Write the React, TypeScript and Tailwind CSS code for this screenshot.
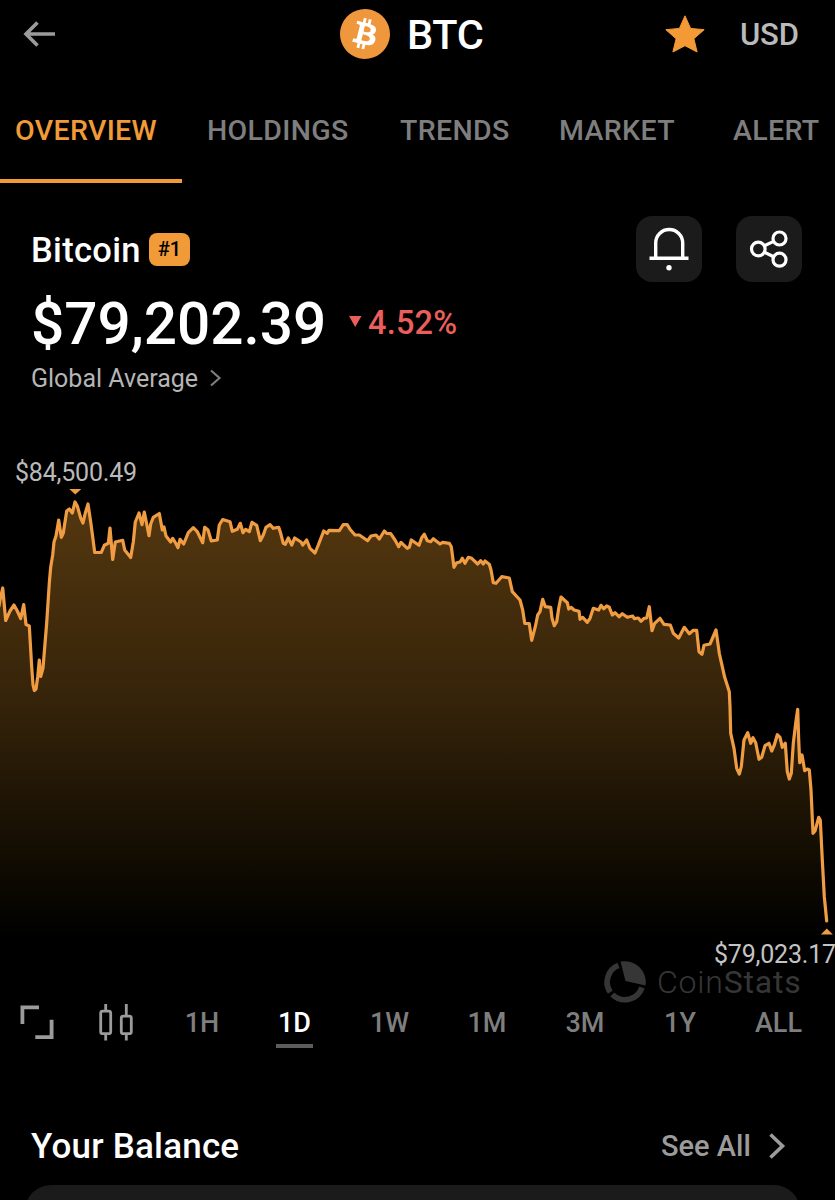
import { SiBitcoin } from 'react-icons/si'

const tabs = [
  { label: 'OVERVIEW', box: 'w-[182px] pl-[15px]', active: true },
  { label: 'HOLDINGS', box: 'w-[193px] pl-[25px]' },
  { label: 'TRENDS', box: 'w-[159px] pl-[25px]' },
  { label: 'MARKET', box: 'w-[174px] pl-[25px]' },
  { label: 'ALERT', box: 'w-[127px] pl-[25px]' },
]

const periods = [
  { label: '1H', box: 'w-[92px]' },
  { label: '1D', box: 'w-[93px]', active: true },
  { label: '1W', box: 'w-[97px]' },
  { label: '1M', box: 'w-[98px]' },
  { label: '3M', box: 'w-[98px]' },
  { label: '1Y', box: 'w-[92px]' },
  { label: 'ALL', box: 'w-[105px]' },
]

// 24h price line, x,y pairs
const line =
  '-1,606 0,600 2.7,588 5.7,620.5 10,611 14,605 17.3,611 20.7,618.5 23.7,604.5 26,624.5 29.3,626 31.7,667 33,685 34.3,690.5 36,689 37.7,677 39.3,660 40.7,676.5 43,668 46.7,623 49.3,583 50.7,567 52.7,555 54,542 56,536 58.7,520 61.3,537.3 63.3,533 66.7,511 69.3,509 72.3,513 75,502 77.3,506 80.7,518 83,523 85.3,513 88,504 90.7,522 92.7,537 94.7,552.5 101.3,552.3 104.3,545.3 108.3,543.3 110,528 112.7,559.5 115.3,542 122.7,540.3 124.7,550 130.7,557.5 133.3,542 135.3,522 139,513 142,524.7 144.3,512 149,535.7 150.7,524 153.3,517.3 159.3,513.5 162.3,530 164,527 166,536 170.7,542 172.7,538.3 175.7,543.3 178,547.7 180,539.3 183.7,544 188.3,532.7 193.3,527.7 197.3,531.7 202.7,542.7 204.7,527.3 208,530 211.3,541 217.3,540 219.3,525 222.7,519.5 230,521.7 232.3,531.3 237.3,529.3 240.3,523.3 243,532.7 245.7,529.3 249.3,531.7 252,522.3 256.7,525.3 260.3,540.7 263.3,535 266,527.3 270,524.7 273.3,528.3 278.7,527.3 280.7,533.3 283.3,543.3 285.3,544.3 288.3,538 291.7,545 294.7,538 301,542 302.7,545 306.7,540 310,548.3 315,553 318.3,545 323.7,531 327.3,533.3 329,530.3 339.3,530.7 343.3,524.7 347.3,524.7 350,529.3 355,535 359.3,535 367.7,540.7 371,536 376,535 379.3,539 384.3,531 386.7,533.3 390.7,533.7 395,540 398.7,546.7 401,542.3 407.3,548.3 409.3,547.3 411.3,540 419,545.3 421.7,537.7 424.3,534.3 427.3,540.7 430.7,541.7 433.3,538.7 440,544 442.7,542.3 449.3,543.3 451.3,546.7 454,567.3 456.7,562.7 460,562 462.3,558.3 465,563.3 468.3,557.3 471.7,558.3 477.7,564 480.7,560.7 483.3,564 485,561 489.3,564.3 491,570 493.3,582.7 496,583.3 501.7,576.7 509.3,578 512.3,591.7 520,600 522.7,610 524.7,623.3 529.3,623.7 531.7,640.3 535.3,626.7 537.7,615 540,611.7 542.7,599.3 545.3,606.7 550.7,607.3 552,618.3 554.3,625.7 556.7,621.7 558.7,608.3 561,597 567.3,602.7 568.7,609 571.3,607.3 574,610 579,611.3 580,619.3 582.7,617.3 587.3,622.3 590,618.3 593.3,608.3 598.7,610 601,605.3 603.7,608.7 606.7,606 609.3,607.3 612.3,615 615,612.7 619,616.7 622.3,613.7 627.3,617.3 632.7,616 634.3,618.7 638.3,618 641,621.3 644,618.3 646.7,618 649.3,606.7 652,630.7 654.7,623.3 660,618.3 664,624.3 670.3,625 673.3,633.3 678.7,638 684.3,627.3 689.3,633.7 693.3,630.3 696.7,630.3 699,651.7 702,654.3 704,645.3 710,644 716,630 719.3,653.3 724.7,677.3 729.3,691.7 730,707 730.7,733.3 734,748.3 736.7,768.3 739.3,774 741.3,766.7 744,740 747.7,732.7 750.7,743.3 753,737.7 755.7,742.7 759,759.3 761.7,757.3 765,745.7 769,743.3 771.7,751 774.3,745 777.3,734.7 780,737.3 782.3,747.3 785.3,743.3 787.3,771.7 789.3,779 791.3,773.3 793.3,743.3 795.7,723.3 797.7,709.3 798.7,740 799.7,762.7 802,755 804.7,770.7 807.3,769 809.3,770 811,790 813,833.3 815,831 818.7,817.3 820.3,820 822.3,860 824.3,896.7 826.7,921'

function Header() {
  return (
    <header className="flex h-[69px] items-center pb-[2px]">
      <svg className="ml-[23px] h-[26px] w-[33px]" viewBox="0 0 33 26" fill="none" stroke="#9b9b9b" strokeWidth="3.6">
        <path d="M14.5 1.5 3 13l11.500 11.500M3 13h29" />
      </svg>
      <div className="ml-[284px] size-[50px] rounded-full bg-[radial-gradient(white_60%,transparent_61%)]">
        <SiBitcoin className="size-[50px] text-[#ef973c]" />
      </div>
      <h1 className="ml-[17px] w-[79px] pt-[2px] text-[41.500px] font-medium tracking-[-0.3px]">BTC</h1>
      <svg className="ml-[179px] h-[38px] w-[40px]" viewBox="0 0 40 38" fill="#f39a36" stroke="#f39a36" strokeLinejoin="round">
        <path d="m20 .8 5.600 12.600 13.600 1.300-10.300 9 3.200 13.300L20 30.700 7.900 37l3.200-13.300-10.300-9 13.600-1.300Z" />
      </svg>
      <span className="ml-[35px] pt-[2px] text-[31px] font-medium tracking-[-0.2px] text-[#bababa]">USD</span>
    </header>
  )
}

function Tabs() {
  return (
    <nav className="flex h-[114px] overflow-hidden">
      {tabs.map(tab => (
        <button
          key={tab.label}
          className={`flex shrink-0 items-center border-b-4 pt-[15px] text-[28.500px] font-medium tracking-[0.350px] ${tab.box} ${tab.active ? 'border-[#f19a38] text-[#f19a38]' : 'border-transparent text-[#7e7e7e]'}`}
        >
          {tab.label}
        </button>
      ))}
    </nav>
  )
}

function Summary() {
  return (
    <section className="pt-[33px] pl-[31px]">
      <div className="flex h-[66px] items-center">
        <h2 className="w-[118px] pt-[2px] text-[34.500px] font-medium tracking-[0.300px]">Bitcoin</h2>
        <span className="flex h-[33px] w-[41px] items-center justify-center rounded-[8px] bg-[#f19a38] text-[20px] font-medium text-black">#1</span>
        <button className="ml-[446px] flex size-[66px] items-center justify-center rounded-[16px] bg-[#1b1b1b]">
          <svg className="size-[66px]" viewBox="0 0 66 66" fill="none" stroke="white" strokeWidth="3.400">
            <path d="M13.500 42.300h39M19.700 42V27a13.500 13.500 0 0 1 27 0v15" />
            <circle cx="33" cy="51.800" r="2.700" fill="white" stroke="none" />
          </svg>
        </button>
        <button className="ml-[34px] flex size-[66px] items-center justify-center rounded-[16px] bg-[#1b1b1b]">
          <svg className="size-[66px]" viewBox="0 0 66 66" fill="none" stroke="white" strokeWidth="3.200">
            <circle cx="22.300" cy="33" r="6.800" />
            <circle cx="43.500" cy="22.500" r="6.500" />
            <circle cx="43.500" cy="43.700" r="6.500" />
            <path d="m28.400 29.800 9.200-4.400M28.400 36.200l9.200 4.600" />
          </svg>
        </button>
      </div>
      <div className="flex h-[82px] items-center">
        <span className="w-[318px] pt-[2px] text-[58.500px] font-medium">$79,202.39</span>
        <svg className="mb-[3px] h-[12px] w-[13px]" viewBox="0 0 13 12" fill="#ea5e5b">
          <path d="M0 0h12.500L6.200 11Z" />
        </svg>
        <span className="ml-[6px] pt-[1px] text-[32.500px] font-medium tracking-[0.200px] text-[#ea5e5b]">4.52%</span>
      </div>
      <div className="flex h-[28px] items-center">
        <span className="w-[179px] text-[25px] text-[#b5b5b5]">Global Average</span>
        <svg className="mb-[1px] h-[18px] w-[12px]" viewBox="0 0 12 18" fill="none" stroke="#7d7d7d" strokeWidth="2.200">
          <path d="m1 1.500 8.500 7.500L1 16.500" />
        </svg>
      </div>
    </section>
  )
}

function Chart() {
  return (
    <section className="relative h-[604px]">
      <svg className="h-[604px] w-full" viewBox="0 392 835 604">
        <defs>
          <linearGradient id="fill" gradientUnits="userSpaceOnUse" x1="0" y1="500" x2="0" y2="940">
            <stop offset="0" stopColor="#54370f" />
            <stop offset="0.45" stopColor="#36240a" />
            <stop offset="0.8" stopColor="#130d02" />
            <stop offset="1" stopColor="#000000" />
          </linearGradient>
        </defs>
        <polygon points={`-1,960 ${line} 826.7,960`} fill="url(#fill)" />
        <polyline points={line} fill="none" stroke="#f09c42" strokeWidth="3.200" strokeLinejoin="round" strokeLinecap="round" />
        <path d="M69.300 489h12L75.300 494.500ZM820.800 934.500h12L826.800 928.500Z" fill="#f09c42" />
      </svg>
      <span className="absolute top-[66px] left-[15px] text-[25px] leading-[30px] tracking-[-0.200px] text-[#bababa]">$84,500.49</span>
      <span className="absolute top-[548px] left-[714px] text-[25px] leading-[30px] tracking-[-0.200px] text-[#c4c4c4]">$79,023.17</span>
      <div className="absolute top-[568px] left-[604px] flex h-[44px] items-center text-[#363636]">
        <svg className="size-[42px]" viewBox="0 0 42 42">
          <path d="M14.500 4.400A18 18 0 0 0 6.200 31.200M8.300 33.500A18 18 0 0 0 38 26.500" fill="none" stroke="currentColor" strokeWidth="5.600" />
          <path d="M16.500.6A21 21 0 0 1 41.500 24.500L21.500 20Z" fill="currentColor" />
        </svg>
        <span className="ml-[11px] text-[32px] font-light tracking-[0.800px]">
          Coin<span className="font-normal">Stats</span>
        </span>
      </div>
    </section>
  )
}

function Periods() {
  return (
    <div className="flex h-[54px] items-center">
      <svg className="mb-[2px] ml-[20px] size-[35px]" viewBox="0 0 35 35" fill="none" stroke="#9b9b9b" strokeWidth="3.800">
        <path d="M19 2.400H2.400V19M15.300 32.100h16.300V14.800" />
      </svg>
      <svg className="mb-[2px] ml-[43px] h-[37px] w-[36px]" viewBox="0 0 36 37" fill="none" stroke="#9b9b9b" strokeWidth="2.800">
        <rect x="2.700" y="7.100" width="10" height="22.600" rx="2" />
        <rect x="23.300" y="12.200" width="10" height="17.500" rx="2" />
        <path d="M7.700 0v7M7.700 30v6.500M28.300 0v12M28.300 30v6.500" />
      </svg>
      <div className="ml-[22px] flex">
        {periods.map(period => (
          <button
            key={period.label}
            className={`relative flex h-[54px] shrink-0 items-center justify-center text-[27px] font-medium ${period.box} ${period.active ? 'text-white' : 'text-[#7e7e7e]'}`}
          >
            {period.label}
            {period.active && <span className="absolute bottom-[2px] h-[4px] w-[37px] bg-[#5c5c5c]" />}
          </button>
        ))}
      </div>
    </div>
  )
}

function Balance() {
  return (
    <section>
      <div className="flex h-[64px] items-center pl-[31px]">
        <h2 className="w-[630px] pt-[1px] text-[35px] font-medium tracking-[0.200px]">Your Balance</h2>
        <span className="w-[107px] text-[29px] font-medium text-[#9b9b9b]">See All</span>
        <svg className="mb-[1px] h-[26px] w-[18px]" viewBox="0 0 18 26" fill="none" stroke="#9b9b9b" strokeWidth="3.600">
          <path d="m2.500 1.500 12 11.500-12 11.500" />
        </svg>
      </div>
      <div className="mt-[7px] ml-[25px] h-[60px] w-[775px] rounded-t-[26px] bg-[#1b1b1b]" />
    </section>
  )
}

export default function App() {
  return (
    <main className="h-[1200px] w-[835px] overflow-hidden bg-black font-['Roboto',sans-serif] leading-none whitespace-nowrap text-white">
      <Header />
      <Tabs />
      <Summary />
      <Chart />
      <Periods />
      <div className="h-[64px]" />
      <Balance />
    </main>
  )
}
